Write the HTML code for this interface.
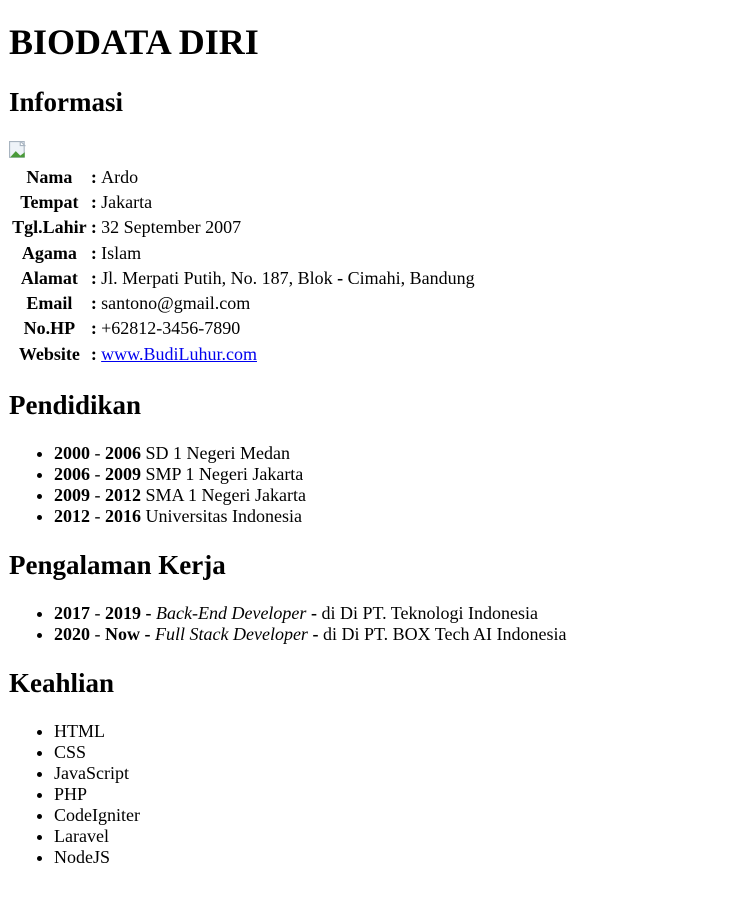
<!DOCTYPE html>
<html style="zoom:1.125"><head><meta charset="utf-8"><style>
body{margin:8px;font-family:"Liberation Serif",serif;font-size:16px;color:#000;background:#fff}
h1{font-size:32px;margin:18.8px 0 21.44px}
h2{font-size:24px;margin:19.92px 0}
th,td{padding:1px}
th{text-align:center}
ul{margin:16px 0;padding-left:40px}
a{color:#00e;text-decoration:underline}
.img{display:inline-block;width:16px;height:16px;vertical-align:baseline}
</style></head><body>
<h1>BIODATA DIRI</h1>
<h2>Informasi</h2>
<span class="img"><svg width="16" height="16" viewBox="0 0 16 16"><rect x="0.5" y="0.5" width="13" height="14" fill="#eef3f8" stroke="#a8b4c0"/><path d="M1 14.5 L6 9 L10 13 L14 10 V14.5 Z" fill="#4a9a3a"/><path d="M10 0 L14 4 L10 4 Z" fill="#fff" stroke="#a8b4c0"/></svg></span>
<table>
<tr><th>Nama</th><th>:</th><td>Ardo</td></tr>
<tr><th>Tempat</th><th>:</th><td>Jakarta</td></tr>
<tr><th>Tgl.Lahir</th><th>:</th><td>32 September 2007</td></tr>
<tr><th>Agama</th><th>:</th><td>Islam</td></tr>
<tr><th>Alamat</th><th>:</th><td>Jl. Merpati Putih, No. 187, Blok <b>-</b> Cimahi, Bandung</td></tr>
<tr><th>Email</th><th>:</th><td>santono@gmail.com</td></tr>
<tr><th>No.HP</th><th>:</th><td>+62812-3456-7890</td></tr>
<tr><th>Website</th><th>:</th><td><a>www.BudiLuhur.com</a></td></tr>
</table>
<h2>Pendidikan</h2>
<ul>
<li><b>2000</b> - <b>2006</b> SD 1 Negeri Medan</li>
<li><b>2006</b> - <b>2009</b> SMP 1 Negeri Jakarta</li>
<li><b>2009</b> - <b>2012</b> SMA 1 Negeri Jakarta</li>
<li><b>2012</b> - <b>2016</b> Universitas Indonesia</li>
</ul>
<h2>Pengalaman Kerja</h2>
<ul>
<li><b>2017</b> - <b>2019 -</b> <i>Back-End Developer</i> <b>-</b> di Di PT. Teknologi Indonesia</li>
<li><b>2020</b> - <b>Now -</b> <i>Full Stack Developer</i> <b>-</b> di Di PT. BOX Tech AI Indonesia</li>
</ul>
<h2>Keahlian</h2>
<ul>
<li>HTML</li><li>CSS</li><li>JavaScript</li><li>PHP</li><li>CodeIgniter</li><li>Laravel</li><li>NodeJS</li>
</ul>
</body></html>
